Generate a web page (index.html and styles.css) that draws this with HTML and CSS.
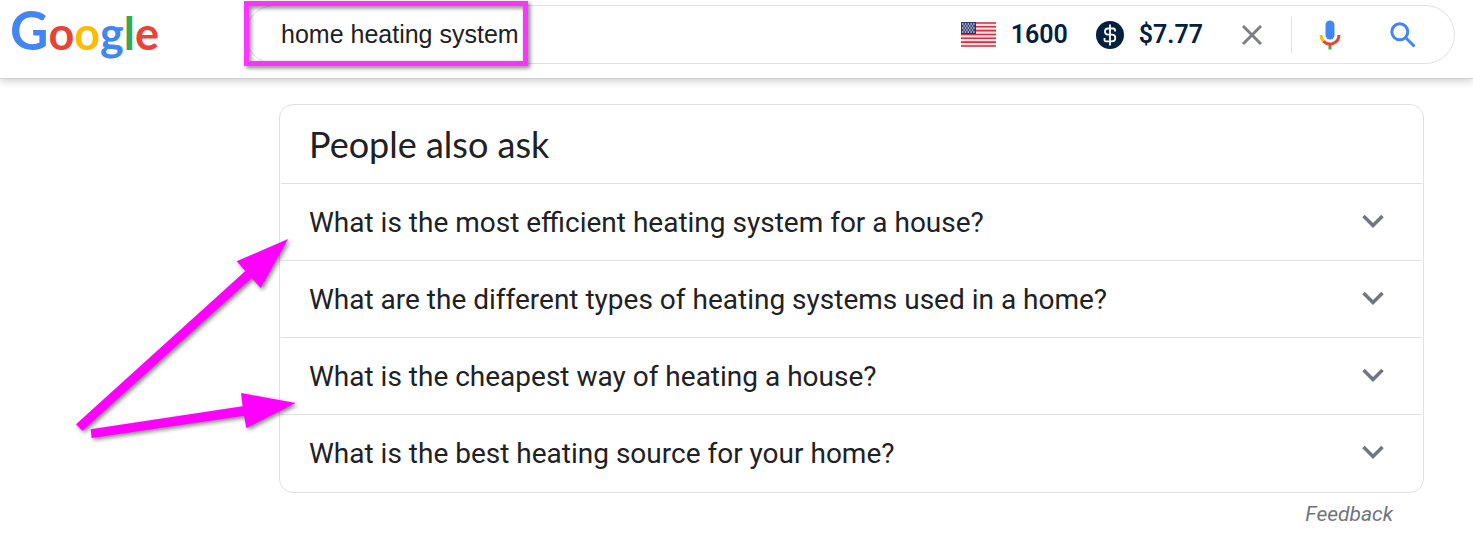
FILE: index.html
```html
<!DOCTYPE html>
<html lang="en">

<head>
	<meta charset="UTF-8">
	<meta name="viewport" content="width=device-width, initial-scale=1.0">
	<title>home heating system - Google Search</title>
	<link rel="stylesheet" href="styles.css">
</head>

<body>
	<header class="header">
		<a class="logo" href="#" aria-label="Google"><span class="blue capital">G</span><span class="red">o</span><span class="yellow">o</span><span class="blue">g</span><span class="green">l</span><span class="red">e</span></a>
		<form class="search" role="search">
			<input class="search-input" type="text" aria-label="Search" value="home heating system">
			<div class="stat">
				<svg width="35" height="25" viewBox="0 0 35 25" aria-hidden="true">
					<path fill="#f3e3dc" d="M0 0h35v25H0z"/>
					<path stroke="#d02f44" stroke-width="1.6" d="M0 1h35M0 4.8h35M0 8.6h35M0 12.5h35M0 16.3h35M0 20.1h35M0 24h35"/>
					<path fill="#2c3a74" d="M0 0h15v12H0z"/>
					<path stroke="#d5d8e2" stroke-width="1.4" stroke-dasharray="1.4 1.4" d="M1 2h13M2.4 4h11M1 6h13M2.4 8h11M1 10h13"/>
				</svg>
				<span>1600</span>
			</div>
			<div class="stat cost">
				<svg width="28" height="28" viewBox="0 0 28 28" aria-hidden="true">
					<circle cx="14" cy="14" r="14" fill="#04203f"/>
					<path fill="none" stroke="#fff" stroke-width="1.8" d="M14 3.500v21M19 10.500V9q0-1.500-1.500-1.500h-5.500q-3 0-3 3t3 3.200h4q3.300 0 3.300 3.300t-3.300 3.300h-6q-1.500 0-1.500-1.500V17"/>
				</svg>
				<span>$7.77</span>
			</div>
			<button class="icon-button clear" type="button" aria-label="Clear">
				<svg width="20" height="20" viewBox="0 0 20 20"><path stroke="#7d7f82" stroke-width="3" d="M1 1l18 18M19 1L1 19"/></svg>
			</button>
			<button class="icon-button mic" type="button" aria-label="Search by voice">
				<svg width="22" height="30" viewBox="0 0 22 30">
					<rect x="6.500" y="0.500" width="9" height="19" rx="4.500" fill="#4285f4"/>
					<path fill="#34a853" d="M9.500 25h3v4.500h-3z"/>
					<g fill="none" stroke-width="3">
						<path stroke="#fbbc05" d="M2 15a9 9 0 0 0 2.800 6.500"/>
						<path stroke="#ea4335" d="M4.500 21.200A9 9 0 0 0 20 15"/>
					</g>
				</svg>
			</button>
			<button class="icon-button" type="submit" aria-label="Google Search">
				<svg width="26" height="26" viewBox="0 0 26 26" fill="none" stroke="#4285f4" stroke-width="3">
					<circle cx="9.800" cy="9.800" r="8"/>
					<path d="M15.500 15.500l9 9"/>
				</svg>
			</button>
		</form>
		<div class="highlight"></div>
	</header>
	<main class="results">
		<section class="card">
			<h2 class="card-title">People also ask</h2>
			<button class="question" type="button" aria-expanded="false">
				<span>What is the most efficient heating system for a house?</span>
				<svg width="22" height="14" viewBox="0 0 22 14"><path d="M1.500 2l9.500 9.500L20.500 2"/></svg>
			</button>
			<button class="question" type="button" aria-expanded="false">
				<span>What are the different types of heating systems used in a home?</span>
				<svg width="22" height="14" viewBox="0 0 22 14"><path d="M1.500 2l9.500 9.500L20.500 2"/></svg>
			</button>
			<button class="question" type="button" aria-expanded="false">
				<span>What is the cheapest way of heating a house?</span>
				<svg width="22" height="14" viewBox="0 0 22 14"><path d="M1.500 2l9.500 9.500L20.500 2"/></svg>
			</button>
			<button class="question" type="button" aria-expanded="false">
				<span>What is the best heating source for your home?</span>
				<svg width="22" height="14" viewBox="0 0 22 14"><path d="M1.500 2l9.500 9.500L20.500 2"/></svg>
			</button>
		</section>
		<a class="feedback" href="#">Feedback</a>
	</main>
	<svg class="arrows" width="260" height="230" viewBox="0 0 780 690" fill="#ff00ff" aria-hidden="true">
		<path d="M48 613l19 19 508-458 27 30 82-147-154 67 26 29z"/>
		<path d="M92 628l3 26 457-67 7 37 148-75-164-30 5 40z"/>
	</svg>
</body>

</html>
```
FILE: styles.css
```css
*
{
	box-sizing: border-box;
}

body
{
	position: relative;
	margin: 0;
	background-color: #fff;
	color: #202124;
	font-family: Roboto, "Liberation Sans", sans-serif;
}

svg
{
	display: block;
	flex: none;
}

.header
{
	position: relative;
	display: flex;
	align-items: flex-start;
	padding: 5px 18px 14px 10px;
	border-bottom: 1px solid #d2d2d2;
	box-shadow: 0 2px 8px rgba(0, 0, 0, 0.2);
}

.logo
{
	flex: none;
	width: 235px;
	font-family: Lato, sans-serif;
	font-size: 45px;
	font-weight: 700;
	line-height: 50px;
	text-decoration: none;
}

.capital
{
	font-size: 53px;
}

.blue
{
	color: #4285f4;
}

.red
{
	color: #ea4335;
}

.yellow
{
	color: #fbbc05;
}

.green
{
	color: #34a853;
}

.search
{
	flex: 1;
	display: flex;
	align-items: center;
	min-width: 0;
	height: 59px;
	padding: 0 38px 0 35px;
	border: 1px solid #dfe1e5;
	border-radius: 30px;
}

.search-input
{
	flex: 1;
	min-width: 0;
	padding: 0;
	border: none;
	outline: none;
	background: none;
	color: #202124;
	font-family: "Liberation Sans", Arial, sans-serif;
	font-size: 25px;
}

.stat
{
	display: flex;
	align-items: center;
	gap: 15px;
	color: #04203f;
	font-size: 25px;
	font-weight: 600;
}

.cost
{
	margin-left: 28px;
}

.icon-button
{
	padding: 0;
	border: none;
	background: none;
	cursor: pointer;
}

.clear
{
	margin-left: 39px;
}

.mic
{
	margin: 0 49px 0 29px;
	padding: 3px 0 3px 27px;
	border-left: 1px solid #dfe1e5;
}

.highlight
{
	position: absolute;
	top: 1px;
	left: 244px;
	width: 284px;
	height: 65px;
	border: 5px solid #ff33ff;
	filter: drop-shadow(2px 2px 2px rgba(0, 0, 0, 0.5));
	pointer-events: none;
}

.results
{
	display: flex;
	flex-direction: column;
	margin: 25px 49px 0 279px;
}

.card
{
	padding: 0 1px 1px;
	border: 1px solid #dfe1e5;
	border-radius: 14px;
}

.card-title
{
	margin: 0;
	padding: 0 28px;
	font-family: Lato, sans-serif;
	font-size: 36px;
	font-weight: 400;
	line-height: 78px;
}

.question
{
	display: flex;
	align-items: center;
	justify-content: space-between;
	width: 100%;
	padding: 1px 38px 0 28px;
	border: none;
	border-top: 1px solid #dfe1e5;
	background: none;
	color: #202124;
	font-family: inherit;
	font-size: 28px;
	line-height: 75px;
	text-align: left;
	cursor: pointer;
}

.question svg
{
	margin-bottom: 4px;
}

.question path
{
	fill: none;
	stroke: #70757f;
	stroke-width: 3.5;
}

.feedback
{
	align-self: flex-end;
	margin: 8px 31px 0 0;
	color: #70757a;
	font-size: 21px;
	font-style: italic;
	line-height: 26px;
	text-decoration: none;
}

.arrows
{
	position: absolute;
	top: 220px;
	left: 60px;
	filter: drop-shadow(2px 2px 2px rgba(0, 0, 0, 0.5));
	pointer-events: none;
}
```
